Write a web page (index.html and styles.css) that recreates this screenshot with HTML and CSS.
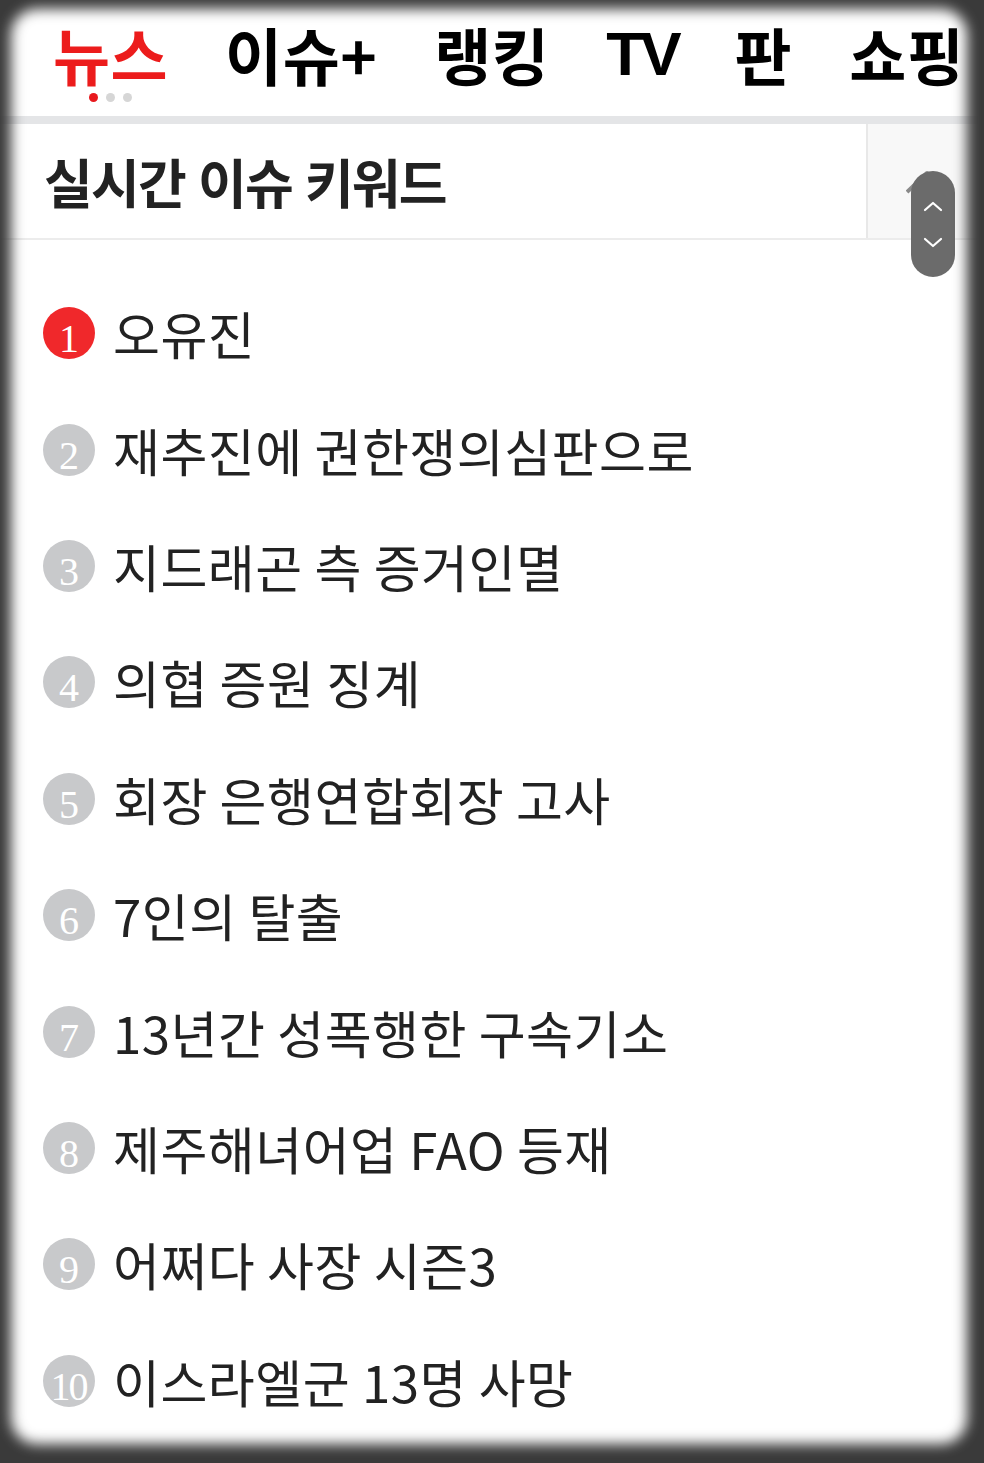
FILE: index.html
```html
<!DOCTYPE html>
<html lang="ko">
<head>
<meta charset="utf-8">
<title>실시간 이슈 키워드</title>
<link rel="stylesheet" href="styles.css">
</head>
<body>
<nav class="gnb">
  <a class="gnb-item active"><span class="gnb-label">뉴스</span><span class="dots"><i class="dot on"></i><i class="dot"></i><i class="dot"></i></span></a>
  <a class="gnb-item"><span class="gnb-label">이슈+</span></a>
  <a class="gnb-item"><span class="gnb-label">랭킹</span></a>
  <a class="gnb-item"><span class="gnb-label latin">TV</span></a>
  <a class="gnb-item"><span class="gnb-label">판</span></a>
  <a class="gnb-item"><span class="gnb-label">쇼핑</span></a>
</nav>
<div class="band"></div>
<section class="issue">
  <header class="issue-head">
    <h2 class="issue-title">실시간 이슈 키워드</h2>
    <div class="issue-side"></div>
  </header>
  <ol class="kw-list">
    <li class="kw"><span class="rank top">1</span><span class="kw-text">오유진</span></li>
    <li class="kw"><span class="rank">2</span><span class="kw-text">재추진에 권한쟁의심판으로</span></li>
    <li class="kw"><span class="rank">3</span><span class="kw-text">지드래곤 측 증거인멸</span></li>
    <li class="kw"><span class="rank">4</span><span class="kw-text">의협 증원 징계</span></li>
    <li class="kw"><span class="rank">5</span><span class="kw-text">회장 은행연합회장 고사</span></li>
    <li class="kw"><span class="rank">6</span><span class="kw-text">7인의 탈출</span></li>
    <li class="kw"><span class="rank">7</span><span class="kw-text">13년간 성폭행한 구속기소</span></li>
    <li class="kw"><span class="rank">8</span><span class="kw-text">제주해녀어업 FAO 등재</span></li>
    <li class="kw"><span class="rank">9</span><span class="kw-text">어쩌다 사장 시즌3</span></li>
    <li class="kw"><span class="rank two">10</span><span class="kw-text">이스라엘군 13명 사망</span></li>
  </ol>
</section>
<div class="scroll-btn">
  <svg width="50" height="112" viewBox="0 0 50 112">
    <polyline points="1,24 21,5 38,24" fill="none" stroke="#8a8a8a" stroke-width="4" stroke-linejoin="round"/>
    <rect x="5" y="3" width="44" height="106" rx="22" fill="#6b6b6b"/>
    <polyline points="19,42 27,35 35,42" fill="none" stroke="#ffffff" stroke-width="2.2" stroke-linecap="round" stroke-linejoin="round"/>
    <polyline points="19,71 27,78 35,71" fill="none" stroke="#ffffff" stroke-width="2.2" stroke-linecap="round" stroke-linejoin="round"/>
  </svg>
</div>
<div class="vignette"></div>
</body>
</html>
```
FILE: styles.css
```css
* { box-sizing: border-box; }
html, body { margin: 0; padding: 0; background: #ffffff; }
body {
  width: 984px;
  height: 1463px;
  overflow: hidden;
  font-family: "Noto Sans CJK KR", "Noto Sans", sans-serif;
  color: #222222;
}

/* top navigation */
.gnb {
  height: 116px;
  display: flex;
  align-items: flex-start;
  gap: 57px;
  padding: 14px 0 0 53px;
  white-space: nowrap;
}
.gnb-item {
  display: flex;
  flex-direction: column;
  align-items: center;
  color: #000000;
  text-decoration: none;
}
.gnb-label {
  font-size: 62px;
  font-weight: 700;
  line-height: 80px;
  letter-spacing: 0.5px;
}
.gnb-label.latin {
  font-family: "Liberation Sans", Arial, sans-serif;
  letter-spacing: -4px;
}
.gnb-item.active { color: #ec1c1c; }
.dots {
  display: flex;
  gap: 8px;
  margin-top: -1px;
}
.dot {
  width: 9px;
  height: 9px;
  border-radius: 50%;
  background: #d6d6d6;
}
.dot.on { background: #e8191e; }

.band { height: 8px; background: #e4e5e7; }

/* issue box */
.issue-head {
  height: 116px;
  display: flex;
  border-bottom: 2px solid #ececec;
}
.issue-title {
  flex: 1;
  margin: 0;
  padding-left: 44px;
  font-size: 53px;
  font-weight: 700;
  line-height: 114px;
  letter-spacing: -1.8px;
  color: #222222;
}
.issue-side {
  width: 118px;
  background: #f8f8f8;
  border-left: 2px solid #e8e8e8;
}

.kw-list {
  list-style: none;
  margin: 0;
  padding: 35px 0 0 43px;
}
.kw {
  height: 116.4px;
  display: flex;
  align-items: center;
  gap: 18px;
}
.rank {
  flex: none;
  width: 52px;
  height: 52px;
  border-radius: 50%;
  background: #c8c9cb;
  color: #ffffff;
  font-family: "Liberation Serif", "Times New Roman", serif;
  font-size: 40px;
  line-height: 40px;
  padding-top: 12px;
  text-align: center;
}
.rank.top { background: #f0282b; }
.rank.two { letter-spacing: -2px; text-indent: -1px; }
.kw-text {
  font-size: 51px;
  font-weight: 400;
  line-height: 60px;
  letter-spacing: 0.5px;
  word-spacing: -3px;
  color: #222222;
  white-space: nowrap;
}

/* floating scroll control */
.scroll-btn {
  position: absolute;
  left: 906px;
  top: 168px;
  width: 50px;
  height: 112px;
}
.scroll-btn svg { display: block; }

/* screen edge shading */
.vignette {
  position: fixed;
  top: -40px;
  left: -40px;
  right: -40px;
  bottom: -40px;
  border-radius: 80px;
  box-shadow: inset -3px -5px 13px 54px #3a3a3a;
  pointer-events: none;
}
```
